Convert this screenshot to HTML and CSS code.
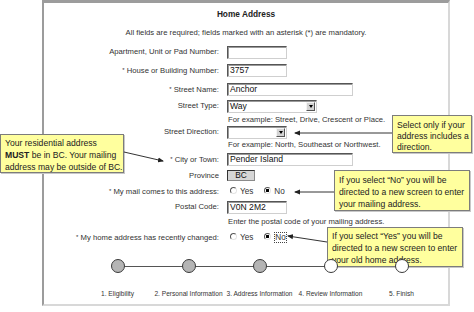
FILE: index.html
```html
<!DOCTYPE html>
<html>
<head>
<meta charset="utf-8">
<link rel="stylesheet" href="styles.css">
</head>
<body>
<div class="page">
  <div class="panel">
    <h1 class="title">Home Address</h1>
    <p class="intro">All fields are required; fields marked with an asterisk (*) are mandatory.</p>
    <div class="form">
      <div class="lbl">Apartment, Unit or Pad Number:</div>
      <div class="fld"><span class="input w60"></span></div>

      <div class="lbl"><span class="ast">*</span> House or Building Number:</div>
      <div class="fld"><span class="input w60">3757</span></div>

      <div class="lbl"><span class="ast">*</span> Street Name:</div>
      <div class="fld"><span class="input w126">Anchor</span></div>

      <div class="lbl">Street Type:</div>
      <div class="fld"><span class="select w90"><span class="val">Way</span><span class="btn"></span></span></div>
      <div class="hint">For example: Street, Drive, Crescent or Place.</div>

      <div class="lbl">Street Direction:</div>
      <div class="fld"><span class="select w60"><span class="val"></span><span class="btn"></span></span></div>
      <div class="hint">For example: North, Southeast or Northwest.</div>

      <div class="lbl"><span class="ast">*</span> City or Town:</div>
      <div class="fld"><span class="input w126">Pender Island</span></div>

      <div class="lbl">Province</div>
      <div class="fld"><span class="ro">BC</span></div>

      <div class="lbl"><span class="ast">*</span> My mail comes to this address:</div>
      <div class="fld radios">
        <span class="radio"></span><span class="rtext">Yes</span>
        <span class="radio on gap"></span><span class="rtext">No</span>
      </div>

      <div class="lbl">Postal Code:</div>
      <div class="fld"><span class="input w60">V0N 2M2</span></div>
      <div class="hint">Enter the postal code of your mailing address.</div>

      <div class="lbl"><span class="ast">*</span> My home address has recently changed:</div>
      <div class="fld radios">
        <span class="radio"></span><span class="rtext">Yes</span>
        <span class="radio on gap"></span><span class="rtext focus">No</span>
      </div>
    </div>

    <div class="steps">
      <div class="step done"><span class="dot"></span><span class="slabel">1. Eligibility</span></div>
      <div class="step done"><span class="dot"></span><span class="slabel">2. Personal Information</span></div>
      <div class="step done"><span class="dot"></span><span class="slabel">3. Address Information</span></div>
      <div class="step"><span class="dot"></span><span class="slabel">4. Review Information</span></div>
      <div class="step"><span class="dot"></span><span class="slabel">5. Finish</span></div>
    </div>
  </div>

  <div class="callout c1">Your residential address<br><b>MUST</b> be in BC. Your mailing<br>address may be outside of BC.</div>
  <div class="callout c2">Select only if your<br>address includes a<br>direction.</div>
  <div class="callout c3">If you select “No” you will be<br>directed to a new screen to enter<br>your mailing address.</div>
  <div class="callout c4">If you select “Yes” you will be<br>directed to a new screen to enter<br>your old home address.</div>

  <svg class="arrows" width="474" height="312" viewBox="0 0 474 312">
    <defs>
      <marker id="ah" markerWidth="6" markerHeight="6" refX="5" refY="3" orient="auto" markerUnits="userSpaceOnUse">
        <path d="M0,0.5 L6,3 L0,5.5 Z" fill="#222"/>
      </marker>
    </defs>
    <line x1="124" y1="152" x2="163" y2="161" stroke="#333" stroke-width="1" marker-end="url(#ah)"/>
    <line x1="392" y1="133" x2="295" y2="133" stroke="#333" stroke-width="1" marker-end="url(#ah)"/>
    <line x1="334" y1="192" x2="295" y2="192" stroke="#333" stroke-width="1" marker-end="url(#ah)"/>
    <line x1="327" y1="242" x2="288" y2="236" stroke="#333" stroke-width="1" marker-end="url(#ah)"/>
  </svg>
</div>
</body>
</html>
```

FILE: styles.css
```css
* { box-sizing: border-box; }

body {
  margin: 0;
  background: #fff;
  font-family: "Liberation Sans", Arial, sans-serif;
  color: #333;
}

.page {
  position: relative;
  width: 474px;
  height: 312px;
  overflow: hidden;
}

.panel {
  margin-left: 42px;
  width: 408px;
  height: 306px;
  border-style: solid;
  border-width: 3px 2px 2px 2px;
  border-color: #9c9c9c #d8d8d8 #d8d8d8 #9c9c9c;
  display: flex;
  flex-direction: column;
}

.title {
  margin: 6px 0 0;
  font-size: 8.3px;
  line-height: 10px;
  font-weight: bold;
  text-align: center;
  color: #222;
}

.intro {
  margin: 9px 0 0;
  font-size: 7.7px;
  line-height: 10px;
  text-align: center;
}

.form {
  margin-top: 5px;
  display: grid;
  grid-template-columns: 175px 1fr;
  column-gap: 8px;
  grid-template-rows: 18px 19px 18px 16px 11px 14px 12px 17px 15px 16px 16px 14px 16px;
  align-items: center;
}

.lbl {
  grid-column: 1;
  text-align: right;
  font-size: 7.7px;
  line-height: 10px;
  white-space: nowrap;
}

.ast { font-size: 6px; vertical-align: 1px; }

.fld { grid-column: 2; display: flex; align-items: center; }

.hint {
  grid-column: 2;
  font-size: 7.7px;
  line-height: 10px;
  padding-left: 1px;
  white-space: nowrap;
}

.input, .select {
  display: block;
  height: 13px;
  border: 1px solid;
  border-color: #555 #cfcfcf #cfcfcf #555;
  box-shadow: inset 1px 1px 0 #9a9a9a;
  background: #fff;
  font-size: 8.6px;
  line-height: 11px;
  padding-left: 2px;
  color: #111;
  white-space: nowrap;
}

.w60 { width: 60px; }
.w90 { width: 90px; }
.w126 { width: 126px; }

.select {
  display: flex;
  align-items: center;
  justify-content: space-between;
  padding-right: 1px;
}

.select .btn {
  width: 9px;
  height: 9px;
  background: #d4d4d4;
  border: 1px solid;
  border-color: #f4f4f4 #555 #555 #f4f4f4;
  display: flex;
  align-items: center;
  justify-content: center;
}

.select .btn::after {
  content: "";
  border-left: 2.5px solid transparent;
  border-right: 2.5px solid transparent;
  border-top: 3px solid #000;
}

.ro {
  display: block;
  width: 28px;
  height: 11px;
  background: #d6d6d6;
  border: 1px solid;
  border-color: #333 #8a8a8a #8a8a8a #333;
  font-size: 8.3px;
  line-height: 9px;
  text-align: center;
  color: #111;
}

.radios { font-size: 8.2px; }

.radio {
  width: 7px;
  height: 7px;
  border-radius: 50%;
  border: 1px solid;
  border-color: #555 #e4e4e4 #e4e4e4 #555;
  background: #fff;
  margin-left: 3px;
  margin-right: 3px;
  margin-top: -2px;
}

.radio.gap { margin-left: 11px; }

.radio.on {
  background: radial-gradient(circle, #000 0 1.4px, #fff 1.8px);
}

.rtext { line-height: 10px; padding-top: 2px; color: #333; }

.rtext.focus {
  outline: 1px dotted #444;
  outline-offset: -1px;
  padding: 1px 1px 0;
  margin-top: 1px;
}

.steps {
  display: flex;
  margin: 14px 0 0 38px;
}

.step {
  width: 71px;
  position: relative;
  display: flex;
  flex-direction: column;
  align-items: center;
}

.step + .step::before {
  content: "";
  position: absolute;
  top: 7px;
  left: -50%;
  width: 100%;
  height: 1px;
  background: #555;
}

.dot {
  width: 14px;
  height: 14px;
  border-radius: 50%;
  border: 1.5px solid #3a3a3a;
  background: #fff;
  position: relative;
  z-index: 1;
}

.step.done .dot { background: #b5b5b5; }

.slabel {
  margin-top: 16px;
  font-size: 6.6px;
  line-height: 9px;
  white-space: nowrap;
  color: #333;
}

.callout {
  position: absolute;
  background: #ffff9e;
  border: 1px solid #7c7c7c;
  box-shadow: 1px 1px 0 #c8c8c8;
  font-size: 8.6px;
  line-height: 12px;
  color: #222;
  padding: 2px 4px;
  white-space: nowrap;
}

.c1 { left: 0; top: 134px; width: 124px; height: 39px; }
.c2 { left: 392px; top: 115px; width: 80px; height: 38px; line-height: 11px; padding-top: 4px; }
.c3 { left: 334px; top: 170px; width: 136px; height: 41px; padding-top: 3px; }
.c4 { left: 327px; top: 227px; width: 136px; height: 40px; padding-top: 2px; }

.arrows {
  position: absolute;
  left: 0;
  top: 0;
  pointer-events: none;
}
```
